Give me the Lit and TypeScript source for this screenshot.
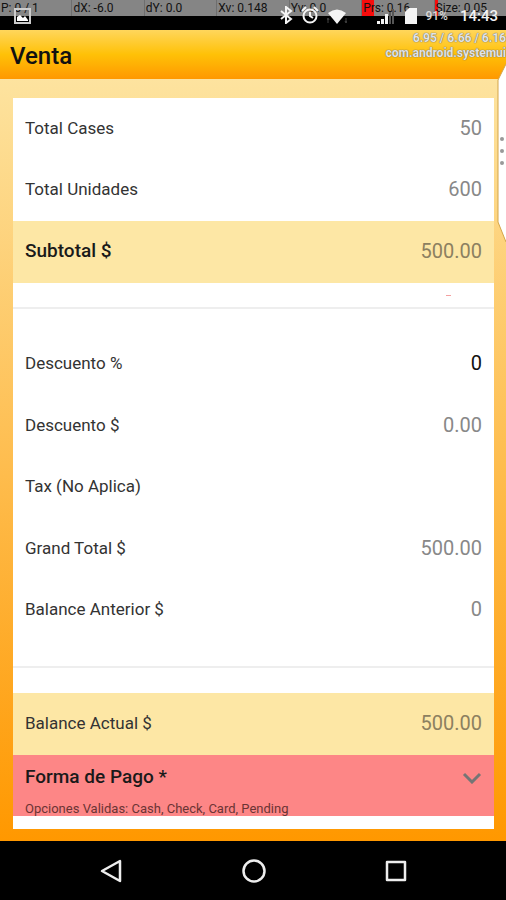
import { LitElement, html, css, svg } from "lit";
import { customElement, state } from "lit/decorators.js";

interface Row {
  id: string;
  label: string;
  value: string;
}

const COUNTS: Row[] = [
  { id: "cases", label: "Total Cases", value: "50" },
  { id: "units", label: "Total Unidades", value: "600" },
];

const TOTALS: Row[] = [
  { id: "discount-amount", label: "Descuento $", value: "0.00" },
  { id: "tax", label: "Tax (No Aplica)", value: "" },
  { id: "grand-total", label: "Grand Total $", value: "500.00" },
  { id: "previous", label: "Balance Anterior $", value: "0" },
];

const METHODS = ["Cash", "Check", "Card", "Pending"];

// Touch readings; load is the filled share of the cell, in percent.
const POINTER = [
  { text: "P: 0 / 1", load: 0 },
  { text: "dX: -6.0", load: 0 },
  { text: "dY: 0.0", load: 0 },
  { text: "Xv: 0.148", load: 0 },
  { text: "Yv: 0.0", load: 0 },
  { text: "Prs: 0.16", load: 16 },
  { text: "Size: 0.05", load: 5 },
];

@customElement("status-bar")
export class StatusBar extends LitElement {
  static styles = css`
    :host {
      display: block;
      position: relative;
      height: 30px;
      background: #000;
      overflow: hidden;
    }
    .pointer {
      display: grid;
      grid-template-columns: repeat(7, 1fr);
      height: 16px;
      background: #6e6e6e;
      gap: 1px;
    }
    .cell {
      position: relative;
      background: #858585;
      color: #111;
      font-size: 12px;
      line-height: 16px;
      padding-left: 1px;
      white-space: nowrap;
    }
    .load {
      position: absolute;
      inset: 0 auto 0 0;
      background: #f80c0c;
    }
    .text {
      position: relative;
    }
    .icons {
      position: absolute;
      inset: 0;
      display: flex;
      align-items: flex-end;
      padding: 0 8px 6px 14px;
      color: #f4f4f4;
      font-size: 15px;
      line-height: 16px;
    }
    .spacer {
      flex: 1;
    }
    .right {
      display: flex;
      align-items: flex-end;
      height: 18px;
    }
    svg {
      display: block;
    }
    .alarm {
      margin-left: 8px;
    }
    .wifi {
      margin-left: 8px;
    }
    .signal {
      margin-left: 30px;
    }
    .battery {
      margin-left: 10px;
    }
    .percent {
      margin-left: 8px;
      font-size: 12px;
      font-weight: 500;
      color: #d8d8d8;
    }
    .time {
      margin-left: 12px;
      font-weight: 500;
    }
  `;

  render() {
    return html`
      <div class="pointer">
        ${POINTER.map(
          (p) => html`<div class="cell">
            ${p.load ? html`<span class="load" style="width:${p.load}%"></span>` : ""}
            <span class="text">${p.text}</span>
          </div>`
        )}
      </div>
      <div class="icons">
        <svg width="17" height="16" viewBox="0 0 17 16" fill="none">
          <path d="M1 1h15v14H1z" stroke="#ccc" stroke-width="2" />
          <path d="M3 13V9l3-2 3 3 2-2 3 4v1z" fill="#fff" />
        </svg>
        <span class="spacer"></span>
        <div class="right">
          <svg width="13" height="18" viewBox="0 0 13 18" fill="none" stroke="currentColor" stroke-width="2">
            <path d="M1 5l10 8-5 4V1l5 4-10 8" />
          </svg>
          <svg class="alarm" width="18" height="18" viewBox="0 0 18 18" fill="none" stroke="currentColor" stroke-width="2">
            <circle cx="9" cy="10" r="6.5" />
            <path d="M9 6v4l3 2M1 5l4-4M17 5l-4-4" />
          </svg>
          <svg class="wifi" width="20" height="16" viewBox="0 0 20 16">
            <path d="M1 5Q10-2 19 5L10 16z" fill="currentColor" />
            <path d="M1 15v-4M0 12l1-2 1 2M19 10v4M18 13l1 2 1-2" stroke="#444" fill="none" />
          </svg>
          <svg class="signal" width="18" height="16" viewBox="0 0 18 16">
            <path d="M0 16v-3h3v3zM4 16v-5h3v5zM8 16V6h3v10z" fill="currentColor" />
            <path d="M12 16V4h2v12zM15 16V1h2v15z" fill="#555" />
          </svg>
          <svg class="battery" width="12" height="16" viewBox="0 0 12 16">
            <path d="M4 0h8v16H0V4z" fill="currentColor" />
          </svg>
          <span class="percent">91%</span>
          <span class="time">14:43</span>
        </div>
      </div>
    `;
  }
}

@customElement("nav-bar")
export class NavBar extends LitElement {
  static styles = css`
    :host {
      display: grid;
      grid-template-columns: repeat(3, 28%);
      justify-content: center;
      height: 59px;
      background: #000;
    }
    button {
      display: grid;
      place-items: center;
      border: 0;
      padding: 0;
      background: none;
      color: #eee;
    }
    svg {
      fill: none;
      stroke: currentColor;
      stroke-width: 2.5;
      stroke-linejoin: round;
    }
  `;

  private key(name: string, shape: unknown) {
    return html`<button aria-label=${name}>
      <svg width="26" height="26" viewBox="0 0 26 26">${shape}</svg>
    </button>`;
  }

  render() {
    return html`
      ${this.key("Atrás", svg`<path d="M22 3v20L4 13z" />`)}
      ${this.key("Inicio", svg`<circle cx="14" cy="13" r="10.5" />`)}
      ${this.key("Recientes", svg`<path d="M5 4h18v18H5z" />`)}
    `;
  }
}

@customElement("app-root")
export class AppRoot extends LitElement {
  static styles = css`
    :host {
      display: flex;
      flex-direction: column;
      position: relative;
      min-height: 100vh;
      overflow: hidden;
      font-family: Roboto, "Liberation Sans", sans-serif;
      color: #333;
    }
    header {
      height: 49px;
      display: flex;
      align-items: center;
      padding: 2px 10px 0;
      box-sizing: border-box;
      background: linear-gradient(#ffd65c, #ffc107 50%, #ff9800);
    }
    h1 {
      margin: 0;
      font-size: 24px;
      line-height: 28px;
      font-weight: 500;
      color: #111;
    }
    main {
      flex: 1;
      display: flex;
      padding: 19px 12px 12px 13px;
      background: linear-gradient(#fde39f, #ff9800);
    }
    form {
      flex: 1;
      display: flex;
      flex-direction: column;
      padding-bottom: 13px;
      background: #fff;
    }
    .row {
      flex: 1 0 60px;
      display: flex;
      align-items: center;
      justify-content: space-between;
      padding: 0 12px 2px;
      box-sizing: border-box;
    }
    .band {
      background: #fde7a5;
    }
    label {
      font-size: 17px;
      line-height: 20px;
    }
    .strong {
      font-size: 19px;
      font-weight: 500;
      color: #1a1a1a;
    }
    output,
    input {
      font: 20px / 24px Roboto, "Liberation Sans", sans-serif;
      color: #888;
    }
    .band output {
      color: #8c8060;
    }
    input {
      width: 120px;
      padding: 0;
      border: 0;
      background: none;
      text-align: right;
      color: #111;
      outline: 0;
    }
    .gap {
      display: flex;
      flex-direction: column;
      justify-content: center;
      height: 52px;
    }
    hr {
      width: 100%;
      height: 2px;
      margin: 0;
      border: 0;
      background: #eee;
    }
    .gap-mark {
      position: relative;
      height: 51px;
    }
    .mark {
      position: absolute;
      top: 12px;
      right: 43px;
      width: 5px;
      height: 1px;
      background: #f4a0a0;
    }
    .payment {
      flex: 1 0 60px;
      display: grid;
      grid-template-columns: auto 1fr;
      align-content: space-between;
      padding: 12px 12px 0;
      box-sizing: border-box;
      background: #fd8686;
    }
    .picker {
      display: grid;
      align-items: center;
      justify-items: end;
    }
    select,
    .chevron {
      grid-area: 1 / 1;
    }
    select {
      width: 100%;
      height: 20px;
      appearance: none;
      border: 0;
      padding: 0;
      background: none;
      outline: 0;
    }
    .chevron {
      pointer-events: none;
    }
    .hint {
      grid-column: 1 / -1;
      margin: 0;
      font-size: 13px;
      line-height: 15px;
      color: #6b3434;
    }
    .load {
      position: absolute;
      top: 31px;
      right: 0;
      margin: 0;
      text-align: right;
      font-size: 12px;
      font-weight: 700;
      line-height: 15px;
      color: #e4e4e4;
      text-shadow: 0 0 1px #666, 0 0 1px #666;
      white-space: nowrap;
    }
    .handle {
      position: absolute;
      top: 60px;
      right: 0;
    }
  `;

  @state() private method = "";

  private row(r: Row) {
    return html`<div class="row">
      <label for=${r.id}>${r.label}</label>
      <output id=${r.id}>${r.value}</output>
    </div>`;
  }

  render() {
    return html`
      <status-bar></status-bar>
      <header><h1>Venta</h1></header>
      <main>
        <form>
          ${COUNTS.map((r) => this.row(r))}
          <div class="row band">
            <label class="strong" for="subtotal">Subtotal $</label>
            <output id="subtotal">500.00</output>
          </div>
          <div class="gap gap-mark">
            <span class="mark"></span>
            <hr />
          </div>
          <div class="row">
            <label for="discount">Descuento %</label>
            <input id="discount" inputmode="decimal" value="0" />
          </div>
          ${TOTALS.map((r) => this.row(r))}
          <div class="gap"><hr /></div>
          <div class="row band">
            <label for="balance">Balance Actual $</label>
            <output id="balance">500.00</output>
          </div>
          <div class="payment">
            <label class="strong" for="method">Forma de Pago *</label>
            <div class="picker">
              <select
                id="method"
                .value=${this.method}
                @change=${(e: Event) => (this.method = (e.target as HTMLSelectElement).value)}
              >
                <option value=""></option>
                ${METHODS.map((m) => html`<option value=${m}>${m}</option>`)}
              </select>
              <svg class="chevron" width="20" height="14" viewBox="0 0 20 14" fill="none">
                <path d="M2 4l8 8 8-8" stroke="#757575" stroke-width="3" />
              </svg>
            </div>
            <p class="hint">Opciones Validas: ${METHODS.join(", ")}</p>
          </div>
        </form>
      </main>
      <nav-bar></nav-bar>
      <p class="load">6.95 / 6.66 / 6.16<br />com.android.systemui</p>
      <svg class="handle" width="10" height="182" viewBox="0 0 10 182">
        <path d="M10 4L2 20v142l8 20z" fill="#fff" />
        <path d="M10 4L2 20v142l8 20" fill="none" stroke="#d3a54a" />
        <g fill="#999">
          <circle cx="6" cy="79" r="2" />
          <circle cx="6" cy="91" r="2" />
          <circle cx="6" cy="103" r="2" />
        </g>
      </svg>
    `;
  }
}
